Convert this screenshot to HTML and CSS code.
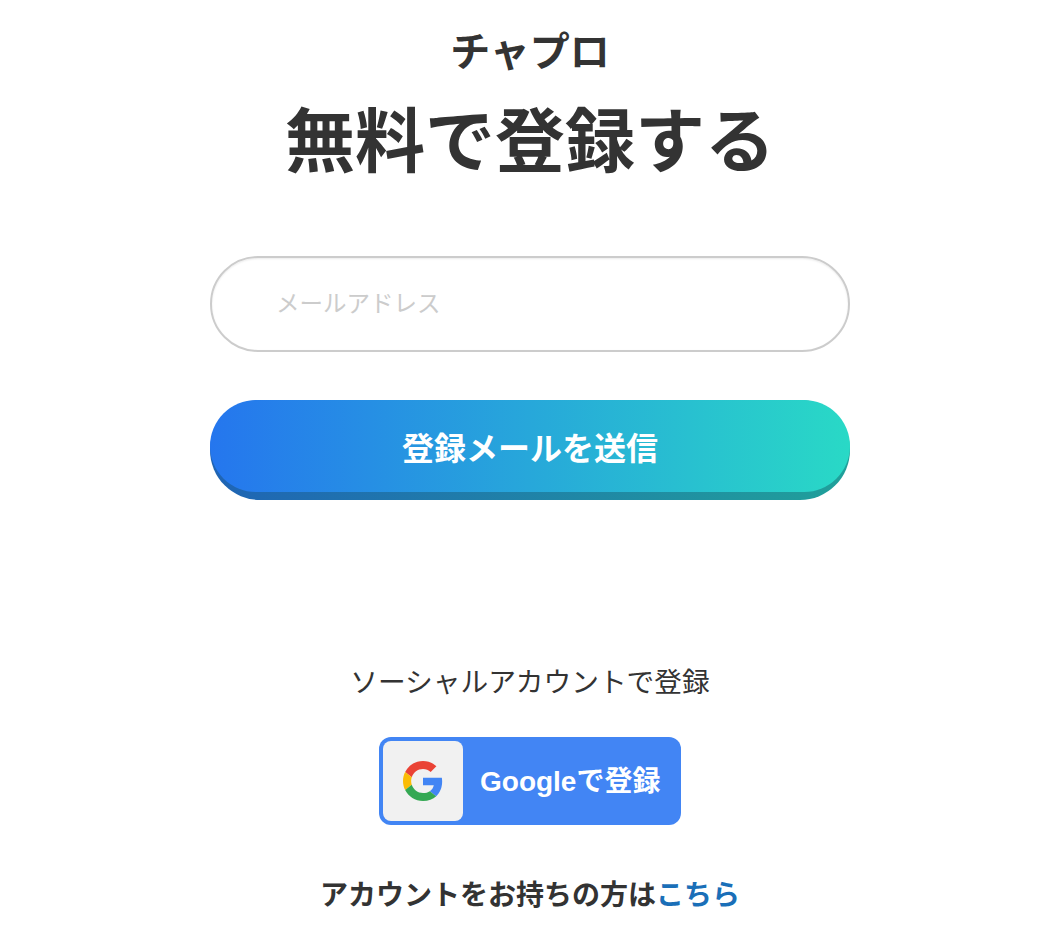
FILE: index.html
```html
<!DOCTYPE html>
<html lang="ja">
<head>
    <meta charset="UTF-8">
    <meta name="viewport" content="width=device-width, initial-scale=1.0">
    <title>無料で登録する</title>
    <link rel="stylesheet" href="styles.css">
</head>
<body>
    <main class="contenedor">
        <div class="logo">チャプロ</div>
        <h1>無料で登録する</h1>
        <input class="campo" type="email" placeholder="メールアドレス">
        <button class="btn-enviar"><span class="btn-cara">登録メールを送信</span></button>
        <p class="social-titulo">ソーシャルアカウントで登録</p>
        <a class="btn-google" href="#">
            <span class="google-icono">
                <svg width="40" height="40" viewBox="0 0 48 48">
                    <path fill="#EA4335" d="M24 9.5c3.54 0 6.71 1.22 9.21 3.6l6.85-6.85C35.9 2.38 30.47 0 24 0 14.62 0 6.51 5.38 2.56 13.22l7.98 6.19C12.43 13.72 17.74 9.5 24 9.5z"/>
                    <path fill="#4285F4" d="M46.98 24.55c0-1.57-.15-3.09-.38-4.55H24v9.02h12.94c-.58 2.96-2.26 5.48-4.78 7.18l7.73 6c4.51-4.18 7.09-10.36 7.09-17.65z"/>
                    <path fill="#FBBC05" d="M10.53 28.59c-.48-1.45-.76-2.99-.76-4.59s.27-3.14.76-4.59l-7.98-6.19C.92 16.46 0 20.12 0 24c0 3.88.92 7.54 2.56 10.78l7.97-6.19z"/>
                    <path fill="#34A853" d="M24 48c6.48 0 11.93-2.13 15.89-5.81l-7.73-6c-2.15 1.45-4.92 2.3-8.16 2.3-6.26 0-11.57-4.22-13.47-9.91l-7.98 6.19C6.51 42.62 14.62 48 24 48z"/>
                </svg>
            </span>
            <span class="google-texto">Googleで登録</span>
        </a>
        <p class="login">アカウントをお持ちの方は<a href="#">こちら</a></p>
    </main>
</body>
</html>
```

FILE: styles.css
```css
body {
    margin: 0;
    background: #fff;
    color: #333;
    font-family: "Noto Sans CJK JP", "Noto Sans", sans-serif;
}
.contenedor {
    width: 640px;
    margin-left: 210px;
    display: flex;
    flex-direction: column;
    align-items: center;
}
.logo {
    margin-top: 20px;
    font-size: 40px;
    line-height: 58px;
    font-weight: 700;
}
h1 {
    margin: 9px 0 0;
    font-size: 70px;
    line-height: 100px;
    font-weight: 700;
}
.campo {
    box-sizing: border-box;
    width: 640px;
    height: 96px;
    margin-top: 69px;
    padding: 0 64px 5px;
    border: 2px solid #ccc;
    border-radius: 48px;
    outline: none;
    background: #fff;
    box-shadow: inset 0 1px 2px rgba(0, 0, 0, 0.08);
    font-family: inherit;
    font-size: 23.5px;
}
.campo::placeholder {
    color: #ccc;
}
.btn-enviar {
    display: flex;
    flex-direction: column;
    width: 640px;
    height: 100px;
    margin-top: 48px;
    padding: 0;
    border: none;
    border-radius: 50px;
    background: linear-gradient(90deg, #1f64b4, #20a09a);
    font-family: inherit;
    cursor: pointer;
}
.btn-cara {
    display: flex;
    align-items: center;
    justify-content: center;
    height: 92px;
    border-radius: 46px;
    background: linear-gradient(90deg, #2576ee, #29d9c6);
    color: #fff;
    font-size: 32px;
    font-weight: 700;
}
.social-titulo {
    margin: 160px 0 0;
    font-size: 27.7px;
    line-height: 40px;
}
.btn-google {
    display: flex;
    align-items: center;
    box-sizing: border-box;
    width: 302px;
    height: 88px;
    margin-top: 37px;
    padding: 4px;
    border-radius: 12px;
    background: #4285f4;
    color: #fff;
    text-decoration: none;
}
.google-icono {
    display: flex;
    align-items: center;
    justify-content: center;
    width: 80px;
    height: 80px;
    border-radius: 8px;
    background: #f1f1f1;
}
.google-texto {
    margin: 0 0 4px 17px;
    font-family: "Liberation Sans", "Noto Sans CJK JP", sans-serif;
    font-size: 28px;
    font-weight: 700;
}
.login {
    margin: 48px 0 0;
    font-size: 28px;
    line-height: 40px;
    font-weight: 700;
}
.login a {
    color: #1a6fb8;
    text-decoration: none;
}
```
